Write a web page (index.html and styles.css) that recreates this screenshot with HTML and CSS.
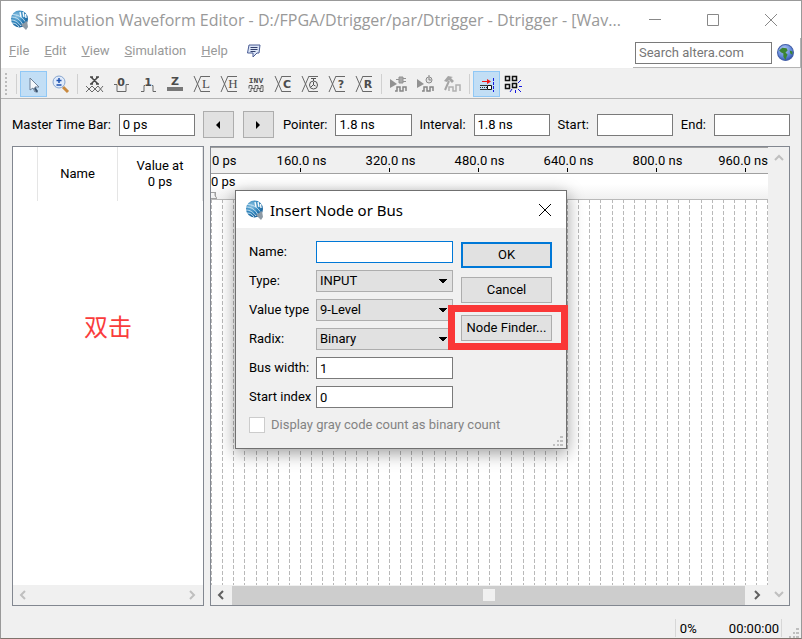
FILE: index.html
```html
<!DOCTYPE html>
<html lang="en">
<head>
<meta charset="utf-8">
<title>Simulation Waveform Editor</title>
<link rel="stylesheet" href="styles.css">
</head>
<body>
<svg class="defs" aria-hidden="true">
  <defs>
    <radialGradient id="ball" cx=".35" cy=".3" r=".8">
      <stop offset="0" stop-color="#8cc3e2"/><stop offset=".5" stop-color="#3286bd"/><stop offset="1" stop-color="#14578f"/>
    </radialGradient>
    <radialGradient id="sea" cx=".4" cy=".3" r=".8">
      <stop offset="0" stop-color="#b5cbf5"/><stop offset=".6" stop-color="#5e86d8"/><stop offset="1" stop-color="#22429a"/>
    </radialGradient>
    <symbol id="logo" viewBox="0 0 20 20">
      <circle cx="9.500" cy="9" r="8.500" fill="url(#ball)"/>
      <path d="M1 7c5 0 9 2 12 8M1 10c4 0 7 2 10 6M2 13c3 0 5 1 7 4M2 4.500c5 0 10 2 13 7" fill="none" stroke="#d3e9f6" stroke-width=".9"/>
      <path d="M10 2l1 5M13 2l1 5M15.500 4l.5 4" stroke="#f4fafd" stroke-width="1.400"/>
      <path d="M11 15l6-4 1 6-2 3z" fill="#8d9aa5"/>
    </symbol>
    <symbol id="x-bracket" viewBox="0 0 27 26">
      <path d="M5 5l7 16M12 5L5 21M21 5.500h-9M21 20.500h-9" fill="none" stroke="#686868"/>
    </symbol>
  </defs>
</svg>
<div class="window">
  <header class="titlebar">
    <svg class="logo"><use href="#logo"/></svg>
    <h1>Simulation Waveform Editor - D:/FPGA/Dtrigger/par/Dtrigger - Dtrigger - [Wav...</h1>
    <div class="caption">
      <button aria-label="Minimize"><svg viewBox="0 0 14 14"><path d="M1 6.500h12"/></svg></button>
      <button aria-label="Maximize"><svg viewBox="0 0 14 14"><path d="M1.500 1.500h11v11h-11z"/></svg></button>
      <button aria-label="Close"><svg viewBox="0 0 14 14"><path d="M1 1l12 12M13 1L1 13"/></svg></button>
    </div>
  </header>
  <div class="menubar">
    <nav>
      <a href="#"><u>F</u>ile</a><a href="#"><u>E</u>dit</a><a href="#"><u>V</u>iew</a><a href="#"><u>S</u>imulation</a><a href="#"><u>H</u>elp</a>
      <button class="bubble" aria-label="Feedback"><svg viewBox="0 0 16 14"><path d="M3 1h11l-1 8h-2l-4 4V9H1.500z" fill="#dce6f8" stroke="#4a5c94"/><path d="M4.500 3.500h7M4.500 5.500h7M4.500 7.500h5" stroke="#33406c"/></svg></button>
    </nav>
    <div class="search">
      <input type="text" aria-label="Search altera.com" placeholder="Search altera.com">
      <button aria-label="Go"><svg viewBox="0 0 16 16"><circle cx="8" cy="8" r="7.500" fill="url(#sea)" stroke="#4661a8"/><path d="M2 6l3-2.500 4 .5 1 2-2 2 2 2-1 2-1 3-2-3V9L4 8zM12 6l2.500 1v3l-2-1z" fill="#3b8533"/></svg></button>
    </div>
  </div>
  <div class="toolbar" role="toolbar">
    <span class="grip"></span><span class="sep"></span>
    <button class="on" aria-label="Select"><svg viewBox="0 0 27 26"><path d="M10 7v12l3-2 2 4 2-1-2-4h4z" fill="#f5f8fb" stroke="#6d7f96"/><path d="M15 16l3 4-1 2-3-4" fill="#38526e"/></svg></button>
    <button aria-label="Zoom"><svg viewBox="0 0 27 26"><path d="M16 16l5 5" stroke="#c98a3f" stroke-width="3"/><circle cx="12" cy="11" r="6" fill="#e0ebfb" stroke="#88a6cf"/><path d="M9.500 9.500h5M12 7v5M9.500 14h5" stroke="#1e52b0" stroke-width="1.500"/></svg></button>
    <span class="sep"></span>
    <button aria-label="Forcing unknown"><svg viewBox="0 0 27 26"><path d="M9 6h3M15 6h3M9 13h3M15 13h3M10 6l7 7M17 6l-7 7" stroke="#484848" stroke-width="1.500"/><path d="M5 15l6 6M11 15l6 6M17 15l5 6M11 15l-6 6M17 15l-6 6M22 15l-5 6" stroke="#686868"/></svg></button>
    <button aria-label="Forcing low"><svg viewBox="0 0 27 26"><text x="13" y="15">0</text><path d="M6 13.500h3v7h9v-7h3" fill="none" stroke="#686868"/></svg></button>
    <button aria-label="Forcing high"><svg viewBox="0 0 27 26"><text x="13" y="15">1</text><path d="M6 20.500h3v-6h1M17 14.500h1v6h3" fill="none" stroke="#686868"/></svg></button>
    <button aria-label="High impedance"><svg viewBox="0 0 27 26"><text x="13" y="14">Z</text><path d="M5 16h16v4H5z" fill="#787878"/></svg></button>
    <button aria-label="Weak low"><svg viewBox="0 0 27 26"><use href="#x-bracket"/><text class="serif" x="17" y="17">L</text></svg></button>
    <button aria-label="Weak high"><svg viewBox="0 0 27 26"><use href="#x-bracket"/><text class="serif" x="17" y="17">H</text></svg></button>
    <button aria-label="Invert"><svg viewBox="0 0 27 26"><text class="inv" x="13" y="12">INV</text><path d="M6 17.500v-3h3v3h3v-3h3v3h3v-3h2v3M6 20.500h2v-3h3v3h3v-3h3v3h3v-3" fill="none" stroke="#606060"/></svg></button>
    <button aria-label="Count value"><svg viewBox="0 0 27 26"><use href="#x-bracket"/><text x="17" y="17">C</text></svg></button>
    <button aria-label="Overwrite clock"><svg viewBox="0 0 27 26"><use href="#x-bracket"/><path d="M14 7.500h5M16.500 7v3" stroke="#555"/><circle cx="16.500" cy="14" r="4" fill="none" stroke="#555"/><path d="M16.500 11v3l2 1M14 16l2-2" fill="none" stroke="#555"/></svg></button>
    <button aria-label="Arbitrary value"><svg viewBox="0 0 27 26"><use href="#x-bracket"/><text x="17" y="17">?</text></svg></button>
    <button aria-label="Random values"><svg viewBox="0 0 27 26"><use href="#x-bracket"/><text x="17" y="17">R</text></svg></button>
    <span class="sep"></span>
    <button aria-label="Run functional simulation"><svg viewBox="0 0 27 26"><path d="M5 8l7 5-7 4z" fill="#929292"/><path d="M11 8.500h3M14 6h4v6h-4zM18 7.500h3M18 10.500h3" fill="#aaa" stroke="#929292"/><path d="M10 20h2v-4h3v4h3v-4h3v4" fill="none" stroke="#858585" stroke-width="1.500"/></svg></button>
    <button aria-label="Run timing simulation"><svg viewBox="0 0 27 26"><path d="M5 8l7 5-7 4z" fill="#929292"/><circle cx="17" cy="9" r="3" fill="#e2e2e2" stroke="#8b8b8b"/><path d="M17 7v2h2M16 5h2" fill="none" stroke="#858585"/><path d="M10 20h2v-4h3v4h3v-4h3v4" fill="none" stroke="#858585" stroke-width="1.500"/></svg></button>
    <button aria-label="Generate testbench"><svg viewBox="0 0 27 26"><path d="M5 10l4-5 5 1-2 1 3 3-2 2-3-3-2 2z" fill="#a5a5a5"/><path d="M10 10l-4 9" stroke="#a5a5a5" stroke-width="2"/><path d="M10 20v-4h4v4h3v-6h4v6" fill="none" stroke="#b0b0b0" stroke-width="1.500"/></svg></button>
    <span class="sep"></span>
    <button class="on" aria-label="Snap to transition"><svg viewBox="0 0 27 26"><path d="M9 10.500h6" stroke="#f01414"/><path d="M14 8l4 2.500-4 2.500z" fill="#f01414"/><path d="M20.500 7v14" stroke="#1418e0" stroke-dasharray="3 1"/><path d="M14.500 14.500h4v4h-4z" fill="#fff" stroke="#111"/><path d="M7 14.500h7M7 18.500h7" stroke="#333"/><path d="M7 16.500h7" stroke="#333" stroke-dasharray="1 1"/></svg></button>
    <button aria-label="Snap to grid"><svg viewBox="0 0 27 26"><path d="M5.500 5.500h4v4h-4zM12.500 5.500h4v4h-4zM5.500 13.500h4v4h-4zM12.500 12.500h4v4h-4z" fill="none" stroke="#111" stroke-width="1.500"/><path d="M18 12l3-3M19 15.500h3M18 18l3 3M15.500 19v3M12 18l-2 3" stroke="#1418e0"/></svg></button>
  </div>

  <div class="timebar">
    <label for="master">Master Time Bar:</label><input id="master" type="text" value="0 ps">
    <button class="step" aria-label="Previous transition"><svg viewBox="0 0 8 8"><path d="M6 0v8L2 4z"/></svg></button>
    <button class="step" aria-label="Next transition"><svg viewBox="0 0 8 8"><path d="M2 0v8l4-4z"/></svg></button>
    <label for="pointer">Pointer:</label><input id="pointer" type="text" value="1.8 ns">
    <label for="interval">Interval:</label><input id="interval" type="text" value="1.8 ns">
    <label for="start">Start:</label><input id="start" type="text">
    <label for="end">End:</label><input id="end" type="text">
  </div>

  <main class="panes">
    <section class="nodes">
      <div class="columns"><span></span><span>Name</span><span>Value at<br>0 ps</span></div>
      <p class="note" lang="zh">双击</p>
      <div class="scroll-x">
        <svg class="chev dim" viewBox="0 0 8 10"><path d="M6 1L2 5l4 4"/></svg>
        <svg class="chev dim" viewBox="0 0 8 10"><path d="M2 1l4 4-4 4"/></svg>
      </div>
    </section>
    <section class="wave">
      <div class="canvas">
        <div class="ruler">
          <span>0 ps</span><span>160.0 ns</span><span>320.0 ns</span><span>480.0 ns</span><span>640.0 ns</span><span>800.0 ns</span><span>960.0 ns</span>
        </div>
        <div class="marker">0 ps<svg viewBox="0 0 6 7"><path d="M0 .5h4v3l2 3H0M4.500 0v5"/></svg></div>
        <div class="grid"></div>
        <div class="scroll-x">
          <svg class="chev" viewBox="0 0 8 10"><path d="M6 1L2 5l4 4"/></svg>
          <div class="thumb"><i></i></div>
          <svg class="chev" viewBox="0 0 8 10"><path d="M2 1l4 4-4 4"/></svg>
        </div>
      </div>
      <div class="scroll-y">
        <svg class="chev dim" viewBox="0 0 10 8"><path d="M1 6l4-4 4 4"/></svg>
        <svg class="chev dim" viewBox="0 0 10 8"><path d="M1 2l4 4 4-4"/></svg>
      </div>
    </section>
  </main>

  <footer class="status">
    <span class="percent">0%</span><span class="clock">00:00:00</span>
    <svg class="size-grip" viewBox="0 0 10 10"><path d="M7 0h3v2H7zM7 4h3v2H7zM7 8h3v2H7zM4 4h2v2H4zM4 8h2v2H4zM0 8h2v2H0z"/></svg>
  </footer>
</div>

<form class="dialog" role="dialog" aria-labelledby="dlg-title">
  <div class="dlg-head">
    <svg class="logo"><use href="#logo"/></svg>
    <h2 id="dlg-title">Insert Node or Bus</h2>
    <button type="button" aria-label="Close"><svg viewBox="0 0 14 14"><path d="M1 1l12 12M13 1L1 13"/></svg></button>
  </div>
  <div class="dlg-body">
    <div class="fields">
      <label for="name">Name:</label><input id="name" class="focus" type="text">
      <label for="type">Type:</label><select id="type"><option>INPUT</option></select>
      <label for="vtype">Value type</label><select id="vtype"><option>9-Level</option></select>
      <label for="radix">Radix:</label><select id="radix"><option>Binary</option></select>
      <label for="width">Bus width:</label><input id="width" type="text" value="1">
      <label for="index">Start index</label><input id="index" type="text" value="0">
    </div>
    <div class="actions">
      <button type="button" class="default">OK</button>
      <button type="button">Cancel</button>
      <div class="highlight"><button type="button">Node Finder...</button></div>
    </div>
    <label class="check"><input type="checkbox" disabled>Display gray code count as binary count</label>
  </div>
  <svg class="size-grip" viewBox="0 0 10 10"><path d="M7 0h3v2H7zM7 4h3v2H7zM7 8h3v2H7zM4 4h2v2H4zM4 8h2v2H4zM0 8h2v2H0z"/></svg>
</form>
</body>
</html>
```
FILE: styles.css
```css
* { box-sizing: border-box; }
body {
  margin: 0;
  color: #000;
  font: 13px/16px Roboto, "Liberation Sans", sans-serif;
}
button, input, select { font: inherit; color: inherit; margin: 0; }
button { padding: 0; border: 0; background: none; }
svg { display: block; }
h1, h2, p { margin: 0; font-weight: 400; }
.defs { position: absolute; width: 0; height: 0; }

.window {
  display: flex;
  flex-direction: column;
  height: 100vh;
  background: #f0f0f0;
  border: 1px solid #999;
  border-bottom-color: #80736c;
}

/* Title bar */
.titlebar {
  display: flex;
  align-items: center;
  height: 37px;
  padding: 0 1px 0 9px;
  background: #fff;
  color: #999;
}
.logo { width: 20px; height: 20px; flex: none; }
h1 { flex: 1; padding-left: 5px; font: 16px/24px "Open Sans", sans-serif; white-space: nowrap; }
.caption { display: flex; }
.caption button { width: 58px; display: grid; place-items: center; }
.caption svg, .dlg-head button svg { width: 14px; height: 14px; fill: none; stroke: #888; }

/* Menu bar */
.menubar {
  display: flex;
  justify-content: space-between;
  height: 31px;
  background: #fff;
  border-bottom: 1px solid #eee;
}
nav { display: flex; gap: 15px; align-items: center; height: 26px; padding-left: 8px; }
nav a { color: #999; text-decoration: none; }
.bubble { padding-left: 3px; }
.bubble svg { width: 16px; height: 14px; }
.search {
  display: flex;
  align-items: center;
  gap: 5px;
  height: 30px;
  padding: 0 6px 0 2px;
  border-right: 1px solid #b4b4b4;
  border-bottom: 1px solid #b4b4b4;
}
.search svg { width: 17px; height: 17px; }
input[type="text"] {
  height: 22px;
  min-width: 0;
  padding: 0 3px;
  border: 1px solid #7a7a7a;
  border-radius: 0;
  background: #fff;
  outline: 0;
}
.search input { width: 137px; }
.search input::placeholder { color: #777; opacity: 1; }

/* Toolbar */
.toolbar {
  display: flex;
  align-items: center;
  height: 30px;
  padding-left: 4px;
  border-bottom: 1px solid #b4b4b4;
}
.grip { width: 2px; height: 22px; margin-right: 6px; background: repeating-linear-gradient(#bbb 0 2px, transparent 2px 4px); }
.sep { width: 7px; height: 20px; flex: none; background: linear-gradient(#d0d0d0, #d0d0d0) 3px 0 / 1px 100% no-repeat; }
.toolbar button { width: 27px; height: 26px; flex: none; }
.toolbar button.on { background: #c2def5; box-shadow: inset 0 0 0 1px #90c8f6; }
.toolbar svg { width: 27px; height: 26px; }
.toolbar text { font: bold 11px "DejaVu Sans", sans-serif; fill: #4c4c4c; text-anchor: middle; }
.toolbar text.serif { font: 13px "Liberation Serif", serif; }
.toolbar text.inv { font: bold 8px "Liberation Mono", monospace; }

/* Time bar */
.timebar { display: flex; align-items: center; padding: 12px 11px 8px; }
.timebar input { flex: 1 1 0; margin: 0 8px 0 8px; }
.timebar input:last-child { margin-right: 0; }
.step {
  width: 31px;
  height: 27px;
  display: grid;
  place-items: center;
  margin-right: 9px;
  border: 1px solid #adadad;
  background: #e1e1e1;
}
.step svg { width: 8px; height: 8px; }

/* Panes */
.panes { flex: 1; min-height: 0; display: flex; gap: 6px; padding: 0 11px; }
.nodes, .wave { border: 1px solid #828790; background: #fff; }
.nodes { width: 192px; flex: none; display: flex; flex-direction: column; }
.columns { display: grid; grid-template-columns: 25px 80px 1fr; height: 54px; text-align: center; }
.columns span { display: grid; align-content: center; border-right: 1px solid #e5e5e5; }
.note {
  flex: 1;
  padding-top: 111px;
  text-align: center;
  color: #fa3c3c;
  font: 24px/28px "Noto Sans CJK SC", sans-serif;
}
.scroll-x {
  display: flex;
  justify-content: space-between;
  align-items: center;
  height: 20px;
  padding: 0 7px 0 6px;
  background: #f0f0f0;
}
.chev { width: 8px; height: 10px; flex: none; fill: none; stroke: #606060; stroke-width: 2; }
.chev.dim { stroke: #bfbfbf; }
.wave { flex: 1; min-width: 0; display: flex; }
.canvas { flex: 1; min-width: 0; display: flex; flex-direction: column; }
.ruler {
  display: flex;
  height: 27px;
  padding: 5px 0 1px 1px;
  border-top: 1px solid #a0a0a0;
  border-bottom: 1px solid #a0a0a0;
  background: #f0f0f0;
  white-space: nowrap;
}
.ruler span { width: 89px; flex: none; text-align: center; }
.ruler span:not(:first-child) { background: linear-gradient(#000, #000) 43px 100% / 1px 4px no-repeat; }
.ruler span:first-child { width: 45px; text-align: left; }
.ruler span:last-child { width: 66px; text-align: right; }
.marker { height: 26px; border-bottom: 1px solid #b9b9b9; background: linear-gradient(#fff 40%, #f0f0f0); }
.marker svg { width: 6px; height: 7px; margin-top: 2px; fill: none; stroke: #a0a0a0; }
.grid {
  flex: 1;
  background:
    repeating-linear-gradient(transparent 0 3px, #fff 3px 5px, transparent 5px 6px),
    linear-gradient(90deg,
      #b9b9b9 0 1px, #fff 1px 11px, #b9b9b9 11px 12px, #fff 12px 22px, #b9b9b9 22px 23px, #fff 23px 33px,
      #b9b9b9 33px 34px, #fff 34px 45px, #b9b9b9 45px 46px, #fff 46px 56px, #b9b9b9 56px 57px, #fff 57px 67px,
      #b9b9b9 67px 68px, #fff 68px 78px, #b9b9b9 78px 79px, #fff 79px 89px) 0 0 / 89px 100%;
}
.thumb { flex: 1; height: 19px; margin: 0 8px 0 7px; display: grid; place-items: center; background: #cdcdcd; }
.thumb i { width: 12px; height: 12px; background: #f0f0f0; }
.scroll-y {
  width: 21px;
  display: flex;
  flex-direction: column;
  justify-content: space-between;
  align-items: center;
  padding: 7px 0;
  background: #f0f0f0;
}
.scroll-y .chev { width: 10px; height: 8px; }

/* Status bar */
.status { display: flex; align-items: center; height: 32px; padding: 12px 2px 0 0; justify-content: flex-end; }
.status span { height: 18px; line-height: 20px; }
.percent { width: 54px; padding-left: 4px; border-left: 1px solid #d7d7d7; }
.clock { padding-right: 2px; border-right: 1px solid #d7d7d7; }
.size-grip { width: 10px; height: 10px; fill: #bfbfbf; }
.status .size-grip { margin-left: 7px; align-self: flex-end; }

/* Dialog floating above the editor */
.dialog {
  position: absolute;
  left: 235px;
  top: 190px;
  width: 332px;
  border: 1px solid #707070;
  background: #f0f0f0;
  box-shadow: 0 4px 16px rgba(0, 0, 0, .4);
}
.dlg-head { display: flex; align-items: center; height: 37px; padding: 0 14px 0 9px; background: #fff; }
.dlg-head h2 { flex: 1; padding-left: 5px; font: 15px/20px "Noto Sans", sans-serif; }
.dlg-head button svg { stroke: #000; }
.dlg-body {
  display: grid;
  grid-template-columns: 204px 91px;
  column-gap: 8px;
  row-gap: 9px;
  padding: 13px 13px 15px;
}
.fields { display: grid; grid-template-columns: 60px 137px; column-gap: 7px; row-gap: 7px; align-items: center; }
.fields label { white-space: nowrap; }
.fields input.focus { border-color: #0078d7; }
select {
  height: 22px;
  padding: 0 3px;
  border: 1px solid #adadad;
  border-radius: 0;
  appearance: none;
  background:
    conic-gradient(from 315deg at 50% 100%, #000 90deg, transparent 0) right 5px center / 8px 4px no-repeat #e1e1e1;
}
.actions { display: flex; flex-direction: column; padding-top: 1px; }
.actions button { width: 91px; height: 26px; border: 1px solid #adadad; background: #e1e1e1; white-space: nowrap; }
.actions > button { margin-bottom: 9px; }
.actions .default { border: 2px solid #0078d7; }
.highlight { width: 120px; margin: -7px 0 0 -13px; padding: 3px 0 2px 6px; border: 7px solid #fa3737; }
.check { grid-column: 1 / -1; display: flex; align-items: center; gap: 6px; color: #838383; }
.check input { appearance: none; width: 16px; height: 16px; border: 1px solid #ccc; background: #fff; }
.dialog > .size-grip { position: absolute; right: 3px; bottom: 2px; }
```
